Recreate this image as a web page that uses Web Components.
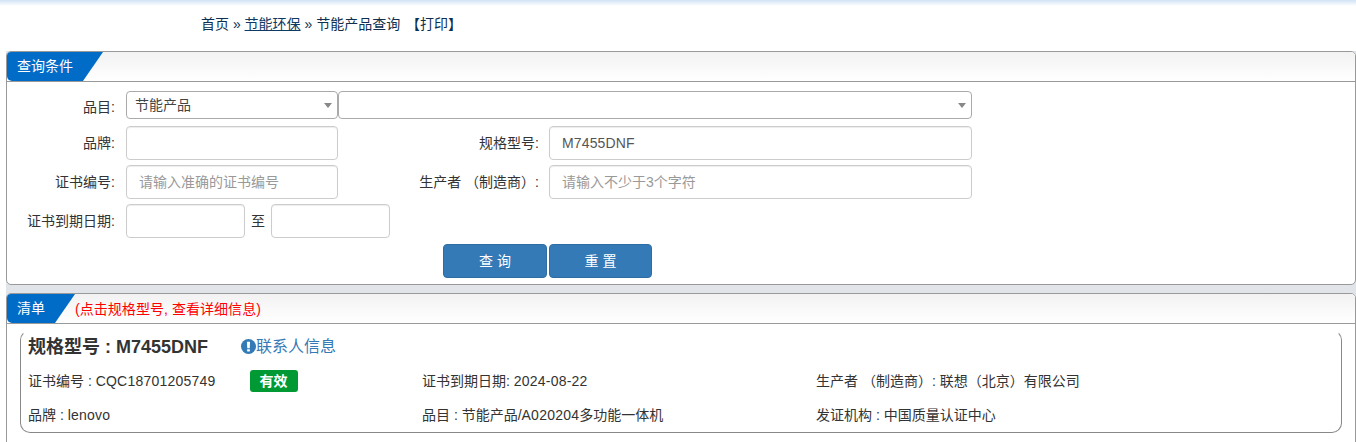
<!DOCTYPE html>
<html lang="zh"><head><meta charset="utf-8"><title>节能产品查询</title>
<style>
html,body{margin:0;padding:0;height:442px;overflow:hidden;background:#fff}
body{font:14px/20px "Liberation Sans","Noto Sans CJK SC",sans-serif;color:#333}
</style></head><body>
<app-page>
  <bread-crumb><span>首页 » </span><a>节能环保</a><span> » 节能产品查询 <span style="margin-left:2px">【打印】</span></span></bread-crumb>
  <panel-box title-text="查询条件" tab="96">
    <query-form></query-form>
  </panel-box>
  <panel-box title-text="清单" tab="68" note="(点击规格型号, 查看详细信息)" tall>
    <result-card></result-card>
  </panel-box>
</app-page>
<script>
function def(name,html){customElements.define(name,class extends HTMLElement{connectedCallback(){if(this.shadowRoot)return;const r=this.attachShadow({mode:'open'});r.innerHTML=typeof html==='function'?html(this):html;}});}
def('app-page',`<style>
:host{display:block}
.top{height:6px;background:linear-gradient(#d0e3f6,#fff)}
.wrap{margin-left:6px;display:flex;flex-direction:column;gap:8px;background:#e1e5e9}
</style><div class="top"></div><div class="wrap"><slot></slot></div>`);
def('bread-crumb',`<style>
:host{display:block;height:45px;margin-left:-6px;background:#fff;padding-left:201px;box-sizing:border-box;color:#0e2f4f;line-height:36px;white-space:pre;margin-bottom:-8px;position:relative}
::slotted(a){color:#0e3a63;text-decoration:underline}
</style><slot></slot>`);
def('panel-box',h=>`<style>
:host{display:block;background:#fff;border:1px solid #999;border-radius:5px;box-sizing:border-box;overflow:hidden;${h.hasAttribute('tall')?'height:170px;':''}}
.hd{height:29px;border-bottom:1px solid #999;background:linear-gradient(#f2f2f2,#fff);display:flex;align-items:center}
.tab{width:${h.getAttribute('tab')}px;height:29px;background:#006cc8;color:#fff;line-height:29px;padding-left:10px;box-sizing:border-box;clip-path:polygon(0 0,100% 0,calc(100% - 20px) 100%,0 100%);flex:none;border-bottom-left-radius:5px}
.note{color:#f00;letter-spacing:.05px}
</style><div class="hd"><div class="tab">${h.getAttribute('title-text')}</div>${h.getAttribute('note')?`<div class="note">${h.getAttribute('note')}</div>`:''}</div><slot></slot>`);
def('ui-select',h=>`<style>
:host{display:flex;align-items:center;height:28px;box-sizing:border-box;border:1px solid #aaa;border-radius:4px;background:#fff;padding-left:8px;position:relative;color:#444;width:${h.getAttribute('w')}px;flex:none}
i{position:absolute;right:5px;top:11px;border-style:solid;border-color:#888 transparent transparent;border-width:5px 4.5px 0}
</style><slot></slot><i></i>`);
def('ui-input',h=>`<style>
:host{display:flex;align-items:center;height:34px;box-sizing:border-box;border:1px solid #ccc;border-radius:4px;background:#fff;padding-left:12px;color:${h.hasAttribute('ph')?'#999':'#555'};width:${h.getAttribute('w')}px;flex:none;box-shadow:inset 0 1px 1px rgba(0,0,0,.075)}
.n{letter-spacing:${h.hasAttribute('ph')?'0':'.15px'}}
</style><span class="n"><slot></slot></span>`);
def('blue-btn',h=>`<style>
:host{display:flex;align-items:center;justify-content:center;height:34px;box-sizing:border-box;background:#337ab7;border:1px solid #2e6da4;border-radius:4px;color:#fff;letter-spacing:4px;padding-left:4px;width:${h.getAttribute('w')}px;flex:none}
</style><slot></slot>`);
def('query-form',`<style>
:host{display:flex;flex-direction:column;padding:9px 0 6px}
.row{display:flex;align-items:center}
.l{width:108px;margin-right:11px;text-align:right;flex:none;white-space:nowrap}
.m{width:201px;margin-right:10px;text-align:right;flex:none;white-space:nowrap}
.to{width:26px;text-align:center;flex:none}
.btns{display:flex;gap:2px;margin-top:6px;margin-left:436px}
.r2{margin-top:7px}.r3{margin-top:5px}
.drop{padding-top:4px}
</style>
<div class="row"><div class="l drop">品目:</div><ui-select w="212">节能产品</ui-select><ui-select w="634"></ui-select></div>
<div class="row r2"><div class="l">品牌:</div><ui-input w="212"></ui-input><div class="m">规格型号:</div><ui-input w="423">M7455DNF</ui-input></div>
<div class="row r3"><div class="l">证书编号:</div><ui-input w="212" ph>请输入准确的证书编号</ui-input><div class="m">生产者 （制造商）:</div><ui-input w="423" ph>请输入不少于3个字符</ui-input></div>
<div class="row r3"><div class="l">证书到期日期:</div><ui-input w="119"></ui-input><div class="to">至</div><ui-input w="119"></ui-input></div>
<div class="btns"><blue-btn w="104">查询</blue-btn><blue-btn w="103">重置</blue-btn></div>`);
def('result-card',`<style>
:host{display:block;margin:6px 13px 0;height:103px;box-sizing:border-box;border:1px solid #888;border-top-color:#fff;border-radius:10px;padding:0 7px}
.t{display:flex;align-items:center;height:31px}
h3{margin:0;font-size:18px;font-weight:bold;width:213px;flex:none;color:#333}
.c{display:flex;align-items:center;color:#337ab7;font-size:16px}
svg{width:15px;height:15px;flex:none}
.g{display:grid;grid-template-columns:394px 394px 1fr;margin-top:9px;row-gap:14px}
.g div{height:20px;white-space:nowrap;display:flex;align-items:center}
.n{letter-spacing:.22px;white-space:pre}
.badge{display:inline-block;width:48px;height:22px;line-height:22px;background:#093;color:#fff;font-weight:bold;text-align:center;border-radius:3px;margin-left:34px}
</style>
<div class="t"><h3>规格型号 : M7455DNF</h3><div class="c"><svg viewBox="0 0 16 16"><circle cx="8" cy="8" r="8" fill="#337ab7"/><path d="M6.3 2.8h3.4l-.4 7H6.7z" fill="#fff"/><rect x="6.5" y="10.8" width="3" height="2.6" rx=".5" fill="#fff"/></svg>联系人信息</div></div>
<div class="g">
<div><span>证书编号 : <span class="n">CQC18701205749</span></span><span class="badge">有效</span></div><div><span>证书到期日期: <span class="n">2024-08-22</span></span></div><div>生产者 （制造商）: 联想（北京）有限公司</div>
<div><span>品牌 : <span class="n">lenovo</span></span></div><div><span>品目 : 节能产品/<span class="n">A020204</span>多功能一体机</span></div><div>发证机构 : 中国质量认证中心</div>
</div>`);
</script>
</body></html>
